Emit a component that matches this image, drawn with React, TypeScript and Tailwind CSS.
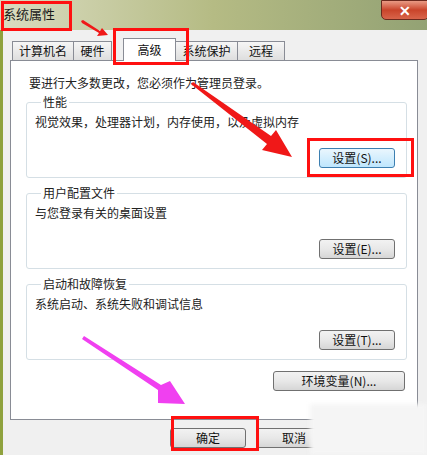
import React from "react";

const font = { fontFamily: '"Noto Sans CJK SC", "Noto Sans", sans-serif' };

function Btn({ children, className = "", blue = false }: { children: React.ReactNode; className?: string; blue?: boolean }) {
  return (
    <div
      className={
        "h-[20px] flex items-center justify-center rounded-[3px] border text-[12px] leading-none text-[#111] " +
        (blue
          ? "border-[#3c7fb1] bg-gradient-to-b from-[#eaf6fd] to-[#bee6fd] "
          : "border-[#707070] bg-gradient-to-b from-[#f2f2f2] via-[#e8e8e8] to-[#d6d6d6] ") +
        className
      }
    >
      {children}
    </div>
  );
}

function Group({ title, desc, btn }: { title: string; desc: string; btn: string }) {
  return (
    <fieldset className="h-[83px] rounded-[3px] border border-[#d5dfe5] pl-[8px] pr-[11px]">
      <legend className="ml-[6px] px-[2px] text-[12px] leading-[14px] text-[#222]">{title}</legend>
      <div className="text-[12px] leading-[14px] text-[#222] mt-[6px]">{desc}</div>
      <div className="mt-[19px] flex justify-end">
        <Btn className="w-[76px]" blue={btn === "设置(S)..."}>{btn}</Btn>
      </div>
    </fieldset>
  );
}

export default function App() {
  return (
    <div className="relative w-[427px] h-[455px] overflow-hidden bg-[#f0f0f0]" style={font}>
      {/* title bar */}
      <div className="h-[30px] flex justify-between bg-gradient-to-r from-[#dadcc0] via-[#b5bb84] to-[#93a274]">
        <div className="pl-[3px] pt-[6px] text-[13px] leading-[16px] text-[#1a1a1a]">系统属性</div>
        <div className="mr-[-2px] h-[20px] w-[48px] rounded-b-[5px] border border-[#6b2a1e] bg-gradient-to-b from-[#e89a84] via-[#c9442a] to-[#d8644a] flex items-center justify-center text-white text-[14px] font-bold leading-none">
          ✕
        </div>
      </div>
      {/* body */}
      <div className="h-[425px] border-l-[3px] border-[#8fa23e] pl-[7px] pr-[9px] flex flex-col">
        {/* tabs */}
        <div className="mt-[7px] h-[23px] flex items-end pl-[2px] text-[12px] text-[#111]">
          <div className="h-[19px] w-[62px] border border-b-0 border-[#898c95] bg-gradient-to-b from-[#f6f6f6] to-[#dedede] flex items-center justify-center">计算机名</div>
          <div className="h-[19px] w-[38px] border border-b-0 border-l-0 border-[#898c95] bg-gradient-to-b from-[#f6f6f6] to-[#dedede] flex items-center justify-center">硬件</div>
          <div className="ml-[11px] h-[23px] w-[53px] border border-b-0 border-[#898c95] bg-white flex items-center justify-center relative z-10 mb-[-1px] pb-[1px]">高级</div>
          <div className="h-[19px] w-[62px] border border-b-0 border-l-0 border-[#898c95] bg-gradient-to-b from-[#f6f6f6] to-[#dedede] flex items-center justify-center">系统保护</div>
          <div className="h-[19px] w-[47px] border border-b-0 border-l-0 border-[#898c95] bg-gradient-to-b from-[#f6f6f6] to-[#dedede] flex items-center justify-center">远程</div>
        </div>
        {/* panel */}
        <div className="h-[360px] border border-[#898c95] bg-white pl-[15px] pr-[10px] flex flex-col">
          <div className="mt-[15px] pl-[3px] text-[12px] leading-[14px] text-[#222]">要进行大多数更改，您必须作为管理员登录。</div>
          <div className="mt-[5px] flex flex-col gap-[8px]">
            <Group title="性能" desc="视觉效果，处理器计划，内存使用，以及虚拟内存" btn="设置(S)..." />
            <Group title="用户配置文件" desc="与您登录有关的桌面设置" btn="设置(E)..." />
            <Group title="启动和故障恢复" desc="系统启动、系统失败和调试信息" btn="设置(T)..." />
          </div>
          <div className="mt-[11px] flex justify-end pr-[2px]">
            <Btn className="w-[132px]">环境变量(N)...</Btn>
          </div>
        </div>
        {/* bottom buttons */}
        <div className="mt-[8px] flex justify-end gap-[10px]">
          <Btn className="w-[76px]">确定</Btn>
          <Btn className="w-[76px]">取消</Btn>
          <Btn className="w-[76px]">应用(A)</Btn>
        </div>
      </div>

      {/* watermark */}
      <div className="absolute left-[310px] top-[404px] w-[117px] h-[51px] bg-[#f5f5f5] blur-[2px]" />

      {/* red annotation boxes */}
      <div className="absolute left-[1px] top-[1px] w-[71px] h-[30px] border-[3px] border-[#ff1010]" />
      <div className="absolute left-[113px] top-[28px] w-[76px] h-[37px] border-[3px] border-[#ff1010]" />
      <div className="absolute left-[307px] top-[138px] w-[107px] h-[39px] border-[3px] border-[#ff1010]" />
      <div className="absolute left-[171px] top-[416px] w-[88px] h-[35px] border-[3px] border-[#ff1010]" />

      {/* arrows */}
      <svg className="absolute left-0 top-0 pointer-events-none" width="427" height="455">
        <polygon points="81,21 82,23 99,33 97,36 108,35 102,28 100,31 83,20" fill="#f01818" />
        <polygon points="191,84 193,82 271,136 276,130 292,157 262,150 267,144" fill="#f01818" />
        <polygon points="82,339 84,336 161,385 170,381 185,404 158,403 158,390" fill="#f040f0" />
      </svg>
    </div>
  );
}
